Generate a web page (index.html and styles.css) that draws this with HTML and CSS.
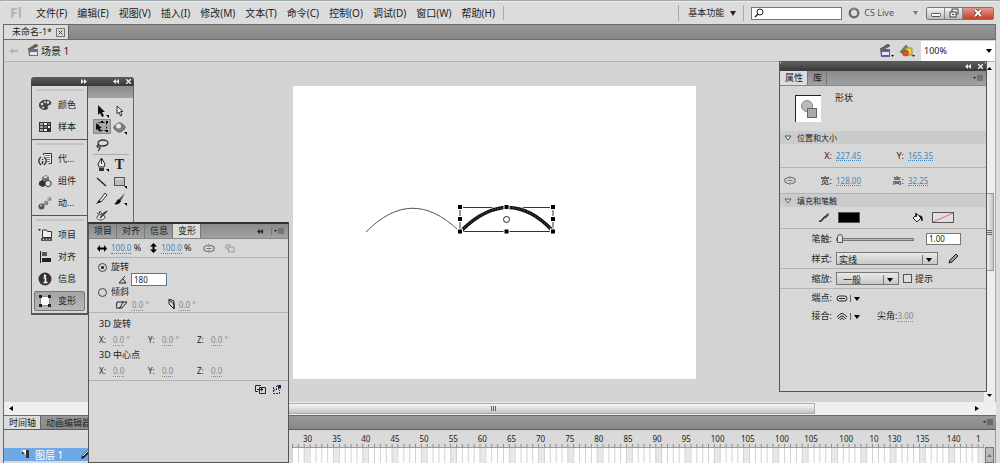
FILE: index.html
```html
<!DOCTYPE html>
<html lang="zh-CN">
<head>
  <meta charset="UTF-8">
  <title>未命名-1</title>
  <link rel="stylesheet" href="styles.css">
</head>
<body>

<div class="app">
  <header class="menubar">
    <span class="logo">Fl</span>
    <nav class="menus">
      <a href="#">文件(F)</a>
      <a href="#">编辑(E)</a>
      <a href="#">视图(V)</a>
      <a href="#">插入(I)</a>
      <a href="#">修改(M)</a>
      <a href="#">文本(T)</a>
      <a href="#">命令(C)</a>
      <a href="#">控制(O)</a>
      <a href="#">调试(D)</a>
      <a href="#">窗口(W)</a>
      <a href="#">帮助(H)</a>
    </nav>
    <div class="menu-right">
      <button class="workspace">基本功能 <svg width="6" height="5" viewBox="0 0 6 5"><path d="M0 0h6L3 5z" fill="#222"/></svg></button>
      <label class="search">
        <svg width="10" height="10" viewBox="0 0 10 10" fill="none" stroke="#222"><circle cx="6" cy="4" r="3"/><path d="M4 6L1 9" stroke-width="1.5"/></svg>
        <input type="text" aria-label="搜索">
      </label>
      <button class="cslive">
        <svg width="12" height="12" viewBox="0 0 12 12" fill="none"><circle cx="6" cy="6" r="4.3" stroke="#666" stroke-width="2.2"/><path d="M3 3a4.3 4.3 0 0 1 5-1" stroke="#999"/></svg>
        <span>CS Live</span>
        <svg width="5" height="4" viewBox="0 0 5 4"><path d="M0 0h5L2.500 4z" fill="#777"/></svg>
      </button>
      <div class="winbtns">
        <button aria-label="最小化"><svg width="10" height="10" viewBox="0 0 10 10"><rect x=".5" y="5.500" width="9" height="3" rx="1" fill="#fff" stroke="#555"/></svg></button>
        <button aria-label="还原"><svg width="10" height="10" viewBox="0 0 10 10" fill="#eee" stroke="#444"><rect x="3" y="1" width="6" height="5"/><rect x="1" y="4" width="6" height="5"/><path d="M3 6.500h2"/></svg></button>
        <button class="close" aria-label="关闭"><svg width="10" height="10" viewBox="0 0 10 10"><path d="M2 2l6 6M8 2L2 8" stroke="#733" stroke-width="3.500"/><path d="M2 2l6 6M8 2L2 8" stroke="#fff" stroke-width="2"/></svg></button>
      </div>
    </div>
  </header>

  <div class="doc-tabs">
    <div class="doc-tab">未命名-1*
      <button aria-label="关闭文档"><svg width="9" height="9" viewBox="0 0 9 9" fill="none" stroke="#777"><rect x=".5" y=".5" width="8" height="8"/><path d="M2.500 2.500l4 4M6.500 2.500l-4 4" stroke="#444"/></svg></button>
    </div>
  </div>

  <div class="editbar">
    <svg width="10" height="8" viewBox="0 0 10 8"><path d="M0 4l4-3v2h5v2H4v2z" fill="#b4b4b4"/></svg>
    <svg class="clapper" width="12" height="13" viewBox="0 0 12 13"><path d="M1 5L9 0l2 2-8 4z" fill="#5d7039" stroke="#333" stroke-width=".5"/><path d="M1 5h10v7H2z" fill="#6d66a0"/><path d="M3 8h7v3H3z" fill="#e7e4fa"/></svg>
    <span>场景 1</span>
    <div class="edit-right">
      <button aria-label="编辑场景"><svg width="15" height="14" viewBox="0 0 15 14"><path d="M1 5L9 0l2 2-8 4z" fill="#6a7440" stroke="#333" stroke-width=".6"/><path d="M1 5h10v8H2z" fill="#655e96"/><path d="M3 8h7v3H3z" fill="#e7e4fa"/><path d="M12 11h3l-1.500 2z" fill="#111"/></svg></button>
      <button aria-label="编辑元件"><svg width="17" height="14" viewBox="0 0 17 14"><path d="M1 8l6-7 2 3-3 6z" fill="#4ba04c" stroke="#265" stroke-width=".6"/><path d="M6 4h7v7H7z" fill="#f2d33c" stroke="#775" stroke-width=".8"/><circle cx="6.500" cy="9" r="3" fill="#e0532d" stroke="#832" stroke-width=".6"/><path d="M13 11h3l-1.500 2z" fill="#111"/></svg></button>
      <div class="zoom select">
        <select aria-label="缩放比例"><option>100%</option></select>
        <svg width="6" height="4" viewBox="0 0 6 4"><path d="M0 0h6L3 4z"/></svg>
      </div>
    </div>
  </div>

  <main class="work">
    <div class="pasteboard">
      <svg class="stage" width="403" height="293" viewBox="0 0 403 293" fill="none">
        <path d="M73 146C104 114.700 134 114.700 165 144" stroke="#555"/>
        <rect x="167" y="121.500" width="93" height="24" stroke="#333"/>
        <path d="M169 144C200 114 230 114 259 144" stroke="#fff" stroke-width="5"/>
        <path d="M169 144C200 114 230 114 259 144" stroke="#111" stroke-width="3.500"/>
        <path d="M169 144C200 114 230 114 259 144" stroke="#777" stroke-dasharray="1 2"/>
        <g fill="#000" stroke="#fff">
          <rect x="164.500" y="118.500" width="5" height="5"/><rect x="211" y="118.500" width="5" height="5"/><rect x="257.500" y="118.500" width="5" height="5"/>
          <rect x="164.500" y="130.500" width="5" height="5"/><rect x="257.500" y="130.500" width="5" height="5"/>
          <rect x="164.500" y="143" width="5" height="5"/><rect x="211" y="143" width="5" height="5"/><rect x="257.500" y="143" width="5" height="5"/>
        </g>
        <circle cx="213.500" cy="133.500" r="3" fill="#fff" stroke="#222"/>
      </svg>
    </div>
    <div class="vscroll">
      <svg width="5" height="3" viewBox="0 0 5 3"><path d="M0 3h5L2.500 0z"/></svg>
      <div class="vtrack"><div class="vthumb"><i></i></div></div>
      <svg width="5" height="3" viewBox="0 0 5 3"><path d="M0 0h5L2.500 3z"/></svg>
    </div>
  </main>

  <div class="hscroll">
    <svg width="4" height="5" viewBox="0 0 4 5"><path d="M4 0v5L0 2.500z"/></svg>
    <div class="htrack"><div class="hthumb"><i></i></div></div>
    <svg width="4" height="5" viewBox="0 0 4 5"><path d="M0 0v5l4-2.500z"/></svg>
  </div>

  <section class="timeline">
    <div class="timeline-tabs">
      <button class="active">时间轴</button>
      <button>动画编辑器</button>
      <svg class="panel-menu" width="10" height="7" viewBox="0 0 10 7"><path d="M0 2h3L1.500 4z" fill="#222"/><path d="M4 1h6M4 3h6M4 5h6" stroke="#444"/></svg>
    </div>
    <div class="timeline-body">
      <div class="layers">
        <div class="layer">
          <svg width="9" height="9" viewBox="0 0 9 9"><path d="M1 0h7v8H5V4H1z" fill="#333"/><path d="M0 0h5v5z" fill="#fff"/></svg>
          <span>图层 1</span>
          <svg width="10" height="10" viewBox="0 0 10 10"><path d="M1 9l1-3 6-6 2 2-6 6z" fill="#123"/><path d="M3 6l5-5" stroke="#fff"/></svg>
        </div>
      </div>
      <div class="frames">
        <div class="ruler">
          <span>30</span><span>35</span><span>40</span><span>45</span><span>50</span><span>55</span><span>60</span><span>65</span><span>70</span><span>75</span><span>80</span><span>85</span><span>90</span><span>95</span><span>100</span><span>105</span><span>100</span><span>105</span><span>100</span><span>10</span><span>130</span><span>135</span><span>140</span><span>1</span>
        </div>
        <div class="cells"></div>
      </div>
      <div class="frames-scroll"><button aria-label="向上滚动"><svg width="5" height="3" viewBox="0 0 5 3"><path d="M0 3h5L2.500 0z" fill="#777"/></svg></button></div>
    </div>
  </section>

  <!-- icon dock and toolbox -->
  <aside class="dock">
    <div class="panel-head">
      <svg class="expand" width="6" height="5" viewBox="0 0 6 5"><path d="M0 0l3 2.500L0 5zM3 0l3 2.500L3 5z" fill="#eee"/></svg>
      <svg width="6" height="5" viewBox="0 0 6 5"><path d="M3 0L0 2.500 3 5zM6 0L3 2.500 6 5z" fill="#eee"/></svg>
      <svg width="5" height="5" viewBox="0 0 5 5"><path d="M0 0l5 5M5 0L0 5" stroke="#eee" stroke-width="1.300"/></svg>
    </div>
    <div class="dock-body">
      <div class="dock-icons">
        <div class="dock-group">
          <button><svg width="14" height="14" viewBox="0 0 14 14"><path d="M1 7c0-4 5-6 9-5 4 1 4 4 2 5-2 0-3 1-2 3 0 3-9 3-9-3z" fill="#444"/><circle cx="4" cy="6" r="1.300" fill="#ddd"/><circle cx="7" cy="4" r="1.200" fill="#bbb"/><circle cx="10" cy="4.500" r="1.200" fill="#eee"/><circle cx="5" cy="9.500" r="1.500" fill="#999"/></svg>颜色</button>
          <button><svg width="14" height="14" viewBox="0 0 14 14"><path d="M1 2h12v10H1z" fill="#333"/><path d="M2 3h3v2H2zM2 6h3v2H2zM2 9h3v2H2z" fill="#aaa"/><path d="M6 3h3v2H6zM6 9h3v2H6zM10 6h2v2h-2z" fill="#eee"/><path d="M10 3h2v2h-2zM6 6h3v2H6z" fill="#777"/></svg>样本</button>
        </div>
        <div class="dock-group">
          <button><svg width="14" height="14" viewBox="0 0 14 14" fill="none" stroke="#333"><path d="M5.500 3V1.500h8v10h-3" fill="#eee"/><path d="M7 3.500h5M8 5.500h4M9 7.500h3M9 9.500h3" stroke="#777"/><path d="M3 5c-3 2-3 5 0 8M6 5c3 2 3 5 0 8M4.500 7v1M4.500 9v3" stroke-width="1.400"/></svg>代...</button>
          <button><svg width="14" height="14" viewBox="0 0 14 14"><path d="M4 3l4-2 3 2v4l-4 2-3-2z" fill="#777"/><path d="M1 8l3-2 3 2v4l-3 1-3-2z" fill="#333"/><path d="M7 8l3-2 3 2v3l-3 2-3-2z" fill="#ddd" stroke="#333"/><path d="M5 3l3-1 2 1-3 1z" fill="#eee"/></svg>组件</button>
          <button><svg width="14" height="14" viewBox="0 0 14 14"><circle cx="3.500" cy="10.500" r="3" fill="#555"/><circle cx="8" cy="7" r="2.300" fill="#777"/><circle cx="11.500" cy="3" r="2" fill="#888"/><circle cx="3" cy="9.500" r="1" fill="#ccc"/><circle cx="7.500" cy="6.500" r=".8" fill="#ddd"/><circle cx="11" cy="2.500" r=".7" fill="#eee"/></svg>动...</button>
        </div>
        <div class="dock-group">
          <button><svg width="14" height="14" viewBox="0 0 14 14"><path d="M0 1h3L1.500 3z" fill="#222"/><path d="M4.500 4V2h4l1 1.500h4v6h-9z" fill="#eee" stroke="#333"/><path d="M3 10h11v3H3z" fill="#555"/><path d="M5 11.500h1M8 11.500h1M11 11.500h1" stroke="#ddd"/></svg>项目</button>
          <button><svg width="14" height="14" viewBox="0 0 14 14"><path d="M2.500 1v12" stroke="#222"/><path d="M4 2h5v4H4z" fill="#555"/><path d="M4 8h9v4H4z" fill="#222"/></svg>对齐</button>
          <button><svg width="14" height="14" viewBox="0 0 14 14"><circle cx="7" cy="7" r="6.500" fill="#333"/><circle cx="7" cy="3.700" r="1.200" fill="#fff"/><path d="M5.500 6H7.500v4.500M5.500 10.500H9.500" stroke="#fff" stroke-width="1.500" fill="none"/></svg>信息</button>
          <button class="selected"><svg width="14" height="14" viewBox="0 0 14 14"><rect x="2.500" y="2.500" width="9" height="9" fill="#fff" stroke="#444" stroke-dasharray="1 1"/><path d="M1 1h3v3H1zM10 1h3v3h-3zM1 10h3v3H1zM10 10h3v3h-3z" fill="#222"/></svg>变形</button>
        </div>
      </div>
      <div class="tools">
        <div class="tools-head"></div>
        <div class="tool-grid">
          <button aria-label="选择"><svg width="14" height="14" viewBox="0 0 14 14"><path d="M3 1v10l2-2 2 4 2-1-2-4h3z" fill="#111"/><path d="M11 11h3v3z"/></svg></button>
          <button aria-label="部分选取"><svg width="14" height="14" viewBox="0 0 14 14"><path d="M4 2v8l2-2 1.500 4 1.500-1-1.500-3.500H10z" fill="#eee" stroke="#333"/></svg></button>
          <button class="on" aria-label="任意变形"><svg width="14" height="14" viewBox="0 0 14 14"><rect x="3.500" y="2.500" width="8" height="8" fill="none" stroke="#111" stroke-dasharray="2 2"/><path d="M1 3v7l2-1 2 3 1-1-1-3h2z" fill="#111"/><path d="M11 1h2v2h-2zM11 10h2v2h-2zM6 1h2v2H6z"/></svg></button>
          <button aria-label="3D 旋转"><svg width="14" height="14" viewBox="0 0 14 14"><ellipse cx="6.500" cy="6.500" rx="6" ry="2.500" fill="none" stroke="#555"/><circle cx="6.500" cy="6.500" r="4.700" fill="#808080" stroke="#555" stroke-width=".7"/><circle cx="5.500" cy="5" r="2.500" fill="#e5e5e5"/><path d="M11 11h3v3z"/></svg></button>
          <button aria-label="套索"><svg width="14" height="14" viewBox="0 0 14 14" fill="none" stroke="#333" stroke-width="1.300"><ellipse cx="8" cy="5" rx="5" ry="3"/><path d="M4 7c-3 0-2 3 0 2s1 2-1 4"/></svg></button>
          <i></i>
          <hr>
          <button aria-label="钢笔"><svg width="14" height="14" viewBox="0 0 14 14"><path d="M6.500 0L10 6 9 9H4L3 6z" fill="#eee" stroke="#222"/><path d="M6.500 1v5" stroke="#222"/><path d="M4 10h5v3H4z" fill="#333"/><path d="M11 11h3v3z"/></svg></button>
          <button class="text-tool" aria-label="文本">T</button>
          <button aria-label="线条"><svg width="14" height="14" viewBox="0 0 14 14"><path d="M2 3l9 8" stroke="#222" stroke-width="1.300"/></svg></button>
          <button aria-label="矩形"><svg width="14" height="14" viewBox="0 0 14 14"><rect x="1.500" y="2.500" width="10" height="8" fill="#bbb" stroke="#555"/><path d="M3 4h7" stroke="#eee"/><path d="M11 11h3v3z"/></svg></button>
          <button aria-label="铅笔"><svg width="14" height="14" viewBox="0 0 14 14"><path d="M4 9l6-8 2 2-6 7z" fill="#eee" stroke="#333"/><path d="M1 12l3-4 2 2z" fill="#111"/></svg></button>
          <button aria-label="刷子"><svg width="14" height="14" viewBox="0 0 14 14"><path d="M6 7l6-6-4 8z" fill="#555"/><path d="M1 12c2 0 2-4 5-5l2 2c-1 3-4 4-7 3z" fill="#111"/><path d="M11 11h3v3z"/></svg></button>
          <button aria-label="装饰"><svg width="14" height="14" viewBox="0 0 14 14" fill="none" stroke="#444"><path d="M2 4l2 1 1-3 2 3 3-2M2 8c0-3 8-3 8 0s-8 5-8 0z" fill="#eee"/><path d="M5 9l7-7" stroke="#333" stroke-width="1.500"/></svg></button>
        </div>
      </div>
    </div>
  </aside>

  <section class="panel transform">
    <div class="panel-tabs">
      <button>项目</button><button>对齐</button><button>信息</button><button class="active">变形</button>
      <svg class="panel-menu" width="28" height="7" viewBox="0 0 28 7"><path d="M3 1L0 3.500 3 6zM6 1L3 3.500 6 6z" fill="#222"/><path d="M14.500 0v7" stroke="#777"/><path d="M17 2h3l-1.500 2z" fill="#222"/><path d="M21 1h6M21 3h6M21 5h6" stroke="#555"/></svg>
    </div>
    <div class="scale">
      <svg width="10" height="7" viewBox="0 0 10 7"><path d="M0 3.500L3 0v2.500h4V0l3 3.500L7 7V4.500H3V7z"/></svg>
      <span><a href="#">100.0</a> %</span>
      <svg class="vertical" width="7" height="10" viewBox="0 0 7 10"><path d="M3.500 0L0 3.500h2.500v3H0L3.500 10 7 6.500H4.500v-3H7z"/></svg>
      <span><a href="#">100.0</a> %</span>
      <svg class="link" width="12" height="9" viewBox="0 0 12 9" fill="none" stroke="#777"><path d="M5 1.500H3.500L1 3v3l2.500 1.500H5M7 1.500h1.500L11 3v3L8.500 7.500H7M3.500 4.500h5M6 0v3M6 6v3" stroke-width="1.200"/></svg>
      <svg width="10" height="9" viewBox="0 0 10 9" fill="none" stroke="#999"><path d="M1 5V1h5M3 3h6v5H4z"/><path d="M2 6l2-2"/></svg>
    </div>
    <div class="rotate">
      <label><input type="radio" name="mode" checked>旋转</label>
      <div class="sub">
        <svg width="9" height="8" viewBox="0 0 9 8" fill="none" stroke="#222"><path d="M7 0L1 7h7M5 3l3 4"/></svg>
        <input class="angle" type="text" value="180" aria-label="旋转角度">
      </div>
      <label><input type="radio" name="mode">倾斜</label>
      <div class="sub skew">
        <svg width="12" height="8" viewBox="0 0 12 8" fill="none" stroke="#222"><path d="M1 1h6L4 7H0zM6 1h5L6 7H3"/></svg>
        <span class="off"><u>0.0</u> °</span>
        <svg class="skew-v" width="7" height="11" viewBox="0 0 7 11" fill="none" stroke="#222"><path d="M1 0v5l5 5V2zM1 1l5 4v5"/></svg>
        <span class="off"><u>0.0</u> °</span>
      </div>
    </div>
    <div class="threed">
      <h3>3D 旋转</h3>
      <div class="xyz"><span>X:</span><span class="off"><u>0.0</u> °</span><span>Y:</span><span class="off"><u>0.0</u> °</span><span>Z:</span><span class="off"><u>0.0</u> °</span></div>
      <h3>3D 中心点</h3>
      <div class="xyz"><span>X:</span><span class="off"><u>0.0</u></span><span>Y:</span><span class="off"><u>0.0</u></span><span>Z:</span><span class="off"><u>0.0</u></span></div>
    </div>
    <div class="actions">
      <button aria-label="重制选区和变形"><svg width="11" height="9" viewBox="0 0 11 9" fill="none" stroke="#224"><path d="M6 .5H.500v6H3M4.500 2.500h6v6h-6zM2 4.500h6M6 3l2 1.500L6 6"/></svg></button>
      <button aria-label="取消变形"><svg width="9" height="9" viewBox="0 0 9 9" fill="none" stroke="#224"><path d="M.5 2v6.500h6V5M.5 5h3V1" stroke-dasharray="2 1"/><path d="M4 0h4v4L7 3 5 5V2z" fill="#224" stroke="none"/></svg></button>
    </div>
  </section>

  <section class="panel props">
    <div class="panel-head">
      <svg width="6" height="5" viewBox="0 0 6 5"><path d="M3 0L0 2.500 3 5zM6 0L3 2.500 6 5z" fill="#eee"/></svg>
      <svg width="5" height="5" viewBox="0 0 5 5"><path d="M0 0l5 5M5 0L0 5" stroke="#eee" stroke-width="1.300"/></svg>
    </div>
    <div class="panel-tabs">
      <button class="active">属性</button><button>库</button>
      <svg class="panel-menu" width="10" height="7" viewBox="0 0 10 7"><path d="M0 2h3L1.500 4z" fill="#222"/><path d="M4 1h6M4 3h6M4 5h6" stroke="#555"/></svg>
    </div>
    <div class="object">
      <div class="thumb"><svg width="18" height="20" viewBox="0 0 18 20" fill="#bbb" stroke="#888"><circle cx="7" cy="7" r="5.500"/><rect x="7.500" y="9.500" width="9" height="9" fill="#aaa" stroke="#666"/></svg></div>
      <span>形状</span>
    </div>
    <h2><svg width="8" height="6" viewBox="0 0 8 6"><path d="M1 1h6L4 5z" fill="#eee" stroke="#555"/></svg>位置和大小</h2>
    <div class="row pos"><span></span><span class="lab">X:</span><a href="#">227.45</a><span class="lab">Y:</span><a href="#">165.35</a></div>
    <div class="row pos size"><svg width="12" height="9" viewBox="0 0 12 9" fill="none" stroke="#777"><path d="M5 1.500H3.500L1 3v3l2.500 1.500H5M7 1.500h1.500L11 3v3L8.500 7.500H7M3.500 4.500h5M6 0v3M6 6v3" stroke-width="1.200"/></svg><span class="lab">宽:</span><a href="#">128.00</a><span class="lab">高:</span><a href="#">32.25</a></div>
    <h2><svg width="8" height="6" viewBox="0 0 8 6"><path d="M1 1h6L4 5z" fill="#eee" stroke="#555"/></svg>填充和笔触</h2>
    <div class="row colors">
      <svg width="10" height="9" viewBox="0 0 10 9"><path d="M0 8.500c4 0 3-3 6-5" fill="none" stroke="#222" stroke-width="1.500"/><path d="M5 4l4-4 1 2-4 4z" fill="#444"/></svg>
      <button class="swatch black" aria-label="笔触颜色"></button>
      <svg class="bucket" width="11" height="10" viewBox="0 0 11 10"><path d="M1 5l4-4 4 4-4 4z" fill="#eee" stroke="#222"/><path d="M4 0v4M7 3c3 0 3 2 3 5" stroke="#111" stroke-width="1.500" fill="none"/></svg>
      <button class="swatch none" aria-label="填充颜色"><svg width="20" height="9" viewBox="0 0 20 9"><path d="M0 9L20 0" stroke="#c77"/></svg></button>
    </div>
    <div class="row">
      <label class="lab" for="stroke">笔触:</label>
      <input type="range" id="stroke" min="0" max="200" value="0">
      <input class="num" type="text" value="1.00" aria-label="笔触高度">
    </div>
    <div class="row line">
      <label class="lab" for="style">样式:</label>
      <div class="select style-select"><select id="style"><option>实线</option></select><svg width="13" height="10" viewBox="0 0 13 10"><path d="M.5 0v10" stroke="#777"/><path d="M4 3h6L7 7z"/></svg></div>
      <svg width="11" height="11" viewBox="0 0 11 11"><path d="M1 10l1-3 6-6 2 2-6 6z" fill="#999" stroke="#222"/></svg>
    </div>
    <div class="row line">
      <label class="lab" for="scale">缩放:</label>
      <div class="select scale-select"><select id="scale"><option>一般</option></select><svg width="13" height="10" viewBox="0 0 13 10"><path d="M.5 0v10" stroke="#777"/><path d="M4 3h6L7 7z"/></svg></div>
      <label class="check"><input type="checkbox">提示</label>
    </div>
    <div class="row join">
      <span class="lab">端点:</span>
      <button aria-label="端点"><svg width="25" height="9" viewBox="0 0 25 9" fill="none" stroke="#222"><rect x="1" y="2" width="10" height="5" rx="2.500"/><path d="M3 4.500h6"/><path d="M14.500 1v7" stroke="#666"/><path d="M18 3h6l-3 4z" fill="#000" stroke="none"/></svg></button>
    </div>
    <div class="row join">
      <span class="lab">接合:</span>
      <button aria-label="接合"><svg width="25" height="9" viewBox="0 0 25 9" fill="none" stroke="#222"><path d="M1 5q5-7 10 0M2 7q4-6 8 0M4 8q2-4 4 0"/><path d="M14.500 1v7" stroke="#666"/><path d="M18 3h6l-3 4z" fill="#000" stroke="none"/></svg></button>
      <span class="miter">尖角:<span class="off"><u>3.00</u></span></span>
    </div>
  </section>
</div>

</body>
</html>
```
FILE: styles.css
```css
* {
  box-sizing: border-box;
}

body {
  margin: 0;
  font-family: "Noto Sans", "Noto Sans CJK SC", sans-serif;
  font-size: 10px;
  line-height: 14px;
  color: #222;
  background: #ddd;
}

button,
input,
select {
  font: inherit;
  color: inherit;
  margin: 0;
  padding: 0;
  border: none;
  background: none;
}

button {
  display: flex;
  align-items: center;
}

a {
  color: inherit;
  text-decoration: none;
}

svg {
  display: block;
  flex: none;
}

.app {
  position: relative;
  display: flex;
  flex-direction: column;
  height: 100vh;
  padding: 0 4px 0 3px;
  overflow: hidden;
  border-top: 1px solid #9fabab;
}

/* menu bar */
.menubar {
  display: flex;
  align-items: center;
  height: 23px;
  padding-left: 7px;
  background: #dcdcdc;
  border-top: 1px solid #eee;
}

.logo {
  width: 26px;
  font-size: 14px;
  font-weight: bold;
  color: #b4b4b4;
}

.menus {
  display: flex;
  align-items: center;
  gap: 10px;
  padding-right: 8px;
  border-right: 1px solid #aaa;
}

.menu-right {
  display: flex;
  align-items: center;
  margin-left: auto;
}

.workspace {
  gap: 6px;
  height: 16px;
  padding: 0 7px 0 9px;
  font-size: 9px;
  border: solid #aaa;
  border-width: 0 1px;
}

.search {
  display: flex;
  align-items: center;
  width: 91px;
  height: 13px;
  margin: 0 6px 0 7px;
  padding: 0 2px;
  border: 1px solid #777;
  background: #fff;
}

.search input {
  width: 70px;
  outline: none;
}

.cslive {
  gap: 4px;
  font-size: 9px;
  color: #555;
}

.cslive span {
  margin-right: 15px;
}

.winbtns {
  display: flex;
  margin: 0 2px 0 8px;
  border: 1px solid #777;
  border-radius: 2px;
  background: linear-gradient(#f2f2f2, #bbb);
}

.winbtns button {
  justify-content: center;
  width: 18px;
  height: 11px;
  border-right: 1px solid #888;
}

.winbtns .close {
  width: 30px;
  border-right: none;
  background: linear-gradient(#e29a8c, #c63e28);
}

/* document tabs */
.doc-tabs {
  display: flex;
  height: 16px;
  border: 1px solid #6a6a6a;
  background: linear-gradient(#989898, #868686);
}

.doc-tab {
  display: flex;
  align-items: center;
  gap: 4px;
  padding: 0 3px 0 8px;
  font-size: 9px;
  background: #dcdcdc;
  border-right: 1px solid #666;
}

.editbar {
  display: flex;
  align-items: center;
  height: 22px;
  padding-left: 5px;
  background: #d8d8d8;
  border: solid #b0b0b0;
  border-width: 0 1px 1px;
  border-left-color: #666;
}

.clapper {
  margin: 0 2px 0 8px;
}

.edit-right {
  display: flex;
  align-items: center;
  gap: 5px;
  margin-left: auto;
}

.select {
  display: grid;
  align-items: center;
}

.select select,
.select svg {
  grid-area: 1 / 1;
}

.select select {
  appearance: none;
  width: 100%;
  outline: none;
}

.select svg {
  justify-self: end;
  pointer-events: none;
}

.zoom {
  width: 74px;
  height: 20px;
  padding: 0 3px;
  font-size: 9px;
  background: #fff;
}

/* work area */
.work {
  display: flex;
  flex: 1;
  min-height: 0;
  border-left: 1px solid #666;
}

.pasteboard {
  display: flex;
  flex: 1;
  align-items: center;
  justify-content: center;
  background: #d4d4d4;
}

.stage {
  background: #fff;
}

.vscroll {
  display: flex;
  flex-direction: column;
  align-items: center;
  width: 12px;
  padding: 5px 0;
  background: #eee;
  border-right: 1px solid #aaa;
}

.vtrack {
  display: flex;
  flex: 1;
  flex-direction: column;
  align-items: center;
  justify-content: center;
}

.vthumb {
  display: flex;
  align-items: center;
  justify-content: center;
  width: 9px;
  height: 24%;
  border: 1px solid #999;
  background: linear-gradient(90deg, #f4f4f4, #c4c4c4);
}

.vthumb i {
  width: 5px;
  height: 5px;
  background: repeating-linear-gradient(#666 0 1px, transparent 1px 2px);
}

.hscroll {
  display: flex;
  align-items: center;
  height: 13px;
  padding: 0 17px 0 5px;
  background: #efefef;
  border-left: 1px solid #666;
}

.htrack {
  flex: 1;
  padding-left: 160px;
}

.hthumb {
  display: flex;
  align-items: center;
  justify-content: center;
  width: 80%;
  height: 11px;
  border: 1px solid #aaa;
  background: linear-gradient(#f6f6f6, #c4c4c4);
}

.hthumb i {
  width: 6px;
  height: 5px;
  background: repeating-linear-gradient(90deg, #666 0 1px, transparent 1px 2px);
}

/* timeline */
.timeline {
  border-left: 1px solid #666;
}

.timeline-tabs {
  display: flex;
  height: 15px;
  border-top: 1px solid #6a6a6a;
  border-bottom: 1px solid #5c5c5c;
  background: linear-gradient(#999, #888);
}

.timeline-tabs button {
  padding: 0 4px 0 5px;
  font-size: 9px;
  border-right: 1px solid #666;
}

.timeline-tabs .active {
  background: #dcdcdc;
}

.panel-menu {
  align-self: center;
  margin-left: auto;
  margin-right: 3px;
}

.timeline-body {
  display: flex;
  height: 33px;
  background: #dadada;
}

.layers {
  flex: none;
  width: 288px;
  padding: 18px 4px 0 0;
}

.layer {
  display: flex;
  align-items: center;
  gap: 5px;
  height: 13px;
  padding-left: 17px;
  color: #fff;
  background: #6ea9e6;
}

.layer span {
  width: 40px;
}

.frames {
  flex: 1;
  min-width: 0;
  overflow: hidden;
}

.ruler {
  display: grid;
  grid-template-columns: repeat(14, 29fr) 30fr 34fr 29fr 35fr 30fr 18fr 28fr 31fr 29fr 8fr;
  height: 18px;
  padding: 2px 0 0 11px;
  font-size: 8px;
  border-bottom: 1px solid #999;
  background: linear-gradient(90deg, #888 1px, transparent 1px) 0 100% / calc(100% / 118) 3px repeat-x;
}

.ruler span {
  min-width: 0;
}

/* every fifth frame is shaded, starting with the third visible one */
.cells {
  height: 15px;
  background:
    linear-gradient(90deg, #d2d2d2 1px, transparent 1px) 0 0 / calc(100% / 118) 100%,
    linear-gradient(90deg, #fff 40%, #e8e8e8 40% 60%, #fff 60%) 0 0 / calc(500% / 118) 100%;
}

.frames-scroll {
  width: 12px;
  padding: 17px 1px 0;
  border-right: 1px solid #999;
}

.frames-scroll button {
  justify-content: center;
  width: 100%;
  height: 16px;
  border: 1px solid #777;
  background: #bbb;
}

/* floating panels */
.panel-head {
  display: flex;
  align-items: center;
  justify-content: flex-end;
  gap: 7px;
  height: 9px;
  padding-right: 3px;
  border-radius: 3px 3px 0 0;
  background: linear-gradient(#5c5c5c, #383838);
}

.dock {
  position: absolute;
  left: 31px;
  top: 76px;
  width: 103px;
  font-size: 9px;
}

.dock .expand {
  margin-right: 19px;
}

.dock-body {
  display: flex;
  align-items: flex-start;
}

.dock-icons {
  flex: 1;
  border: 1px solid #555;
  border-width: 0 1px 1px;
}

.dock-group {
  padding: 8px 2px 1px;
  border-bottom: 1px solid #555;
  background: linear-gradient(#c4c4c4, #c4c4c4) 4px 3px / 48px 2px no-repeat #d8d8d8;
}

.dock-group button {
  gap: 6px;
  width: 100%;
  height: 22px;
  padding-left: 4px;
}

.dock-group .selected {
  height: 20px;
  margin: 1px 0;
  border: 1px solid #777;
  border-radius: 2px;
  padding-left: 3px;
  background: linear-gradient(#a4a4a4, #b8b8b8);
}

.tools {
  width: 46px;
  border-right: 1px solid #666;
  background: #d8d8d8;
}

.tools-head {
  height: 12px;
  background: linear-gradient(#8a8a8a, #a2a2a2);
}

.tool-grid {
  display: grid;
  grid-template-columns: 18px 18px;
  justify-content: center;
  padding: 4px 0 2px;
}

.tool-grid button {
  justify-content: center;
  height: 17px;
}

.tool-grid .on {
  height: 15px;
  background: #aaa;
  border: 1px solid #888;
}

.tool-grid hr {
  grid-column: 1 / 3;
  width: 100%;
  height: 1px;
  margin: 1px 0;
  border: none;
  background: #aaa;
}

.tool-grid .text-tool {
  font: bold 14px "Liberation Serif", serif;
}

.panel {
  position: absolute;
  background: #d7d7d7;
  border: 1px solid #555;
  font-size: 9px;
}

.panel a,
.off {
  font-size: 8px;
}

.panel a {
  color: #3f86b8;
  border-bottom: 1px dotted #3f86b8;
}

.off {
  color: #888;
}

.off u {
  text-decoration: none;
  border-bottom: 1px dotted #888;
}

.panel-tabs {
  display: flex;
  height: 15px;
  background: linear-gradient(#8a8a8a, #a2a2a2);
  border-bottom: 1px solid #888;
}

.panel-tabs button {
  padding: 0 4px 0 5px;
  border-right: 1px solid #777;
}

.panel-tabs .active {
  background: #dcdcdc;
}

.transform {
  left: 88px;
  top: 221px;
  bottom: 0;
  width: 201px;
  border-top: 2px solid #333;
}

.scale {
  display: flex;
  align-items: center;
  height: 19px;
  padding-left: 8px;
  gap: 4px;
  border-bottom: 1px solid #b4b4b4;
}

.scale .vertical {
  margin-left: 5px;
}

.scale .link {
  margin: 0 6px 0 7px;
}

.rotate {
  height: 55px;
  padding: 3px 0 0 9px;
  line-height: 12px;
  border-bottom: 1px solid #b4b4b4;
}

.rotate label {
  display: flex;
  align-items: center;
  gap: 4px;
}

input[type="radio"] {
  appearance: none;
  width: 9px;
  height: 9px;
  border: 1px solid #444;
  border-radius: 50%;
}

input[type="radio"]:checked {
  background: radial-gradient(#222 0 1px, transparent 2px);
}

.sub {
  display: flex;
  align-items: center;
  gap: 4px;
  height: 13px;
  padding-left: 20px;
}

.angle {
  width: 36px;
  height: 13px;
  padding-left: 2px;
  font-size: 8px;
  border: 1px solid #3f7fae;
  background: #fff;
}

.skew {
  padding-left: 18px;
}

.skew-v {
  margin-left: 15px;
}

.threed {
  height: 68px;
  padding: 4px 0 0 10px;
  border-bottom: 1px solid #b4b4b4;
}

.threed h3 {
  margin: 0;
  font-size: 9px;
  font-weight: normal;
}

.xyz {
  display: grid;
  grid-template-columns: repeat(3, 14px 35px);
  align-items: center;
  height: 17px;
  font-size: 8px;
}

.actions {
  display: flex;
  justify-content: flex-end;
  gap: 7px;
  padding: 4px 6px 0 0;
}

/* property inspector */
.props {
  right: 13px;
  top: 60px;
  width: 208px;
  height: 331px;
}

.object {
  display: flex;
  gap: 14px;
  height: 45px;
  padding: 9px 0 0 15px;
}

.object span {
  line-height: 5px;
}

.thumb {
  display: flex;
  align-items: center;
  justify-content: center;
  width: 26px;
  height: 27px;
  border: solid #222;
  border-width: 1px 0 0 1px;
  background: #fff;
}

.props h2 {
  display: flex;
  align-items: center;
  gap: 5px;
  height: 13px;
  margin: 0;
  padding-left: 4px;
  font-size: 8px;
  font-weight: normal;
  background: #cbcbcb;
}

.row {
  display: flex;
  align-items: center;
  gap: 4px;
  height: 20px;
}

.row.line {
  border-bottom: 1px solid #b4b4b4;
}

.row.join {
  height: 18px;
}

.lab {
  width: 52px;
  text-align: right;
}

.pos {
  display: grid;
  grid-template-columns: 12px 32px 32px 32px 32px;
  height: 24px;
  padding-left: 4px;
  border-bottom: 1px solid #b4b4b4;
}

.pos .lab {
  width: auto;
}

.pos a {
  justify-self: start;
  line-height: 9px;
}

.pos.size {
  height: 26px;
}

.colors {
  gap: 9px;
  height: 22px;
  padding-left: 39px;
  border-bottom: 1px solid #b4b4b4;
}

.swatch {
  width: 22px;
  height: 11px;
  border: 1px solid #555;
}

.swatch.black {
  background: #000;
}

.swatch.none {
  background: #e6dcdc;
}

.bucket {
  margin-left: 43px;
}

input[type="range"] {
  appearance: none;
  width: 78px;
  height: 11px;
  margin-right: 8px;
}

input[type="range"]::-webkit-slider-runnable-track {
  height: 3px;
  border: 1px solid #777;
  background: #bbb;
}

input[type="range"]::-webkit-slider-thumb {
  appearance: none;
  width: 6px;
  height: 9px;
  margin-top: -5px;
  border: 1px solid #555;
  border-radius: 3px 3px 0 0;
  background: #ddd;
}

.num {
  width: 35px;
  height: 12px;
  padding-left: 2px;
  font-size: 8px;
  border: 1px solid #777;
  background: #fff;
}

.style-select,
.scale-select {
  width: 102px;
  height: 13px;
  padding: 0 2px;
  border: 1px solid #777;
  background: linear-gradient(#e8e8e8, #c8c8c8);
}

.style-select {
  margin-right: 6px;
}

.scale-select {
  width: 63px;
  padding-left: 6px;
}

.check {
  display: flex;
  align-items: center;
  gap: 3px;
}

.check input {
  appearance: none;
  width: 9px;
  height: 9px;
  border: 1px solid #555;
  background: #ddd;
}

.miter {
  margin-left: 12px;
}
```
